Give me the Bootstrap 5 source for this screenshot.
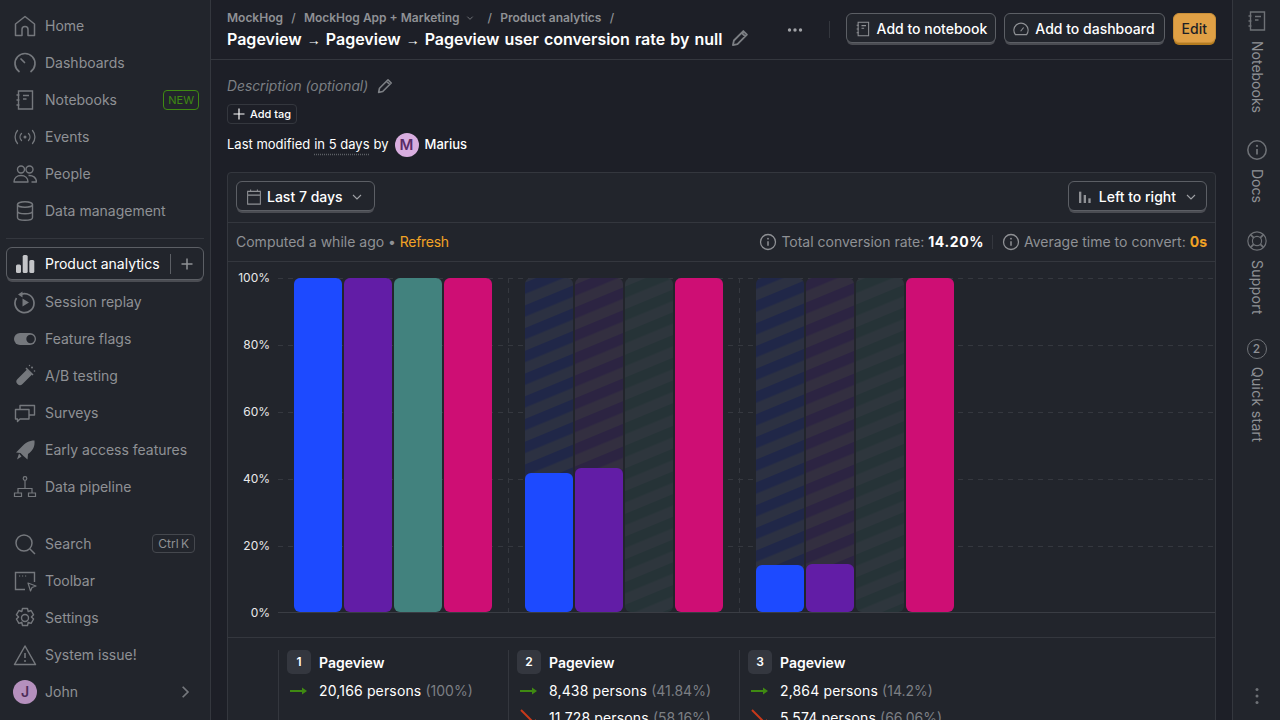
<!DOCTYPE html>
<html lang="en">
<head>
<meta charset="UTF-8">
<title>Pageview conversion</title>
<link href="https://cdn.jsdelivr.net/npm/bootstrap@5.3.0/dist/css/bootstrap.min.css" rel="stylesheet">
<style>
html, body { height: 720px; overflow: hidden; }
body { background: #1d1f27; color: #fff; font-family: Inter, "Liberation Sans", sans-serif; font-size: 14px; }
svg { display: block; flex: none; }
.app-shell { height: 720px; }
.side-nav { width: 211px; background: #22252c; border-right: 1px solid #34373e; padding: 7px 6px 0; }
.side-item { height: 37px; padding: 0 8px 0 7px; gap: 8px; color: #8f9195; text-decoration: none; white-space: nowrap; }
.side-item svg { width: 24px; height: 24px; color: #75787d; }
.side-item svg.side-chev { width: 14px; height: 14px; margin-right: 4px; }
.side-active { height: 33px; margin-bottom: 3px; padding: 0 8px 0 6px; gap: 8px; color: #fff; border: 1px solid #5c5f65; border-radius: 6px; box-shadow: 0 3px 0 -1px #4a4c52; background: #22252c; white-space: nowrap; text-decoration: none; }
.side-active > svg { width: 24px; height: 24px; color: #c4c5c8; }
.side-plus { height: 20px; padding-left: 8px; border-left: 1px solid #5c5f65; color: #8f9195; }
.side-rule { border-top: 1px solid #34373e; margin: 9px 0 8px; }
.tag-new { font-size: 11px; line-height: 18px; color: #3f8a12; border: 1px solid #3f8a12; border-radius: 4px; padding: 0 4px; margin-left: auto; margin-right: -3px; }
.key-hint { font-size: 12px; line-height: 17px; color: #8f9195; border: 1px solid #45484e; border-radius: 4px; padding: 0 5px; margin-left: auto; margin-right: 1px; word-spacing: -1px; }
.avatar-dot { width: 24px; height: 24px; border-radius: 50%; background: #b590bd; color: #4d2c58; font-weight: 600; font-size: 14px; }
.side-bottom { margin-top: auto; padding-bottom: 10px; }
.main-col { min-width: 0; }
.top-bar { height: 60px; border-bottom: 1px solid #34373e; padding: 0 16px; flex: none; }
.crumbs { font-size: 12px; font-weight: 600; color: #8f9195; line-height: 16px; margin-top: 10px; }
.crumbs i { font-style: normal; font-weight: 500; margin: 0 8.250px; }
.page-title { font-size: 16px; font-weight: 600; line-height: 20px; margin: 3px 0 0; white-space: nowrap; word-spacing: 1px; }
.page-title span { font-family: "Liberation Sans", sans-serif; font-weight: 400; font-size: 14px; }
.ghost-icon { color: #7c7f84; }
.top-actions { margin-bottom: 3px; }
.dots-icon { color: #a0a2a6; margin: 4px 17px 0 0; }
.top-split { width: 1px; height: 17px; background: #34373e; margin: 3px 16px 0 8px; }
.lift-btn { height: 30px; color: #fff; background: #22252c; border: 1px solid #5c5f65; border-radius: 6px; box-shadow: 0 3px 0 -1px #4a4c52; padding: 1px 8px 0 7px; gap: 5px; font-size: 14px; font-weight: 500; white-space: nowrap; }
.lift-btn svg { color: #8f9195; }
.top-gap { margin-right: 8px; padding-right: 9px; }
.edit-btn { height: 30px; color: #1d1f27; background: #e0a045; border: 1px solid #c98f39; border-radius: 6px; box-shadow: 0 3px 0 -1px #b57c1f; padding: 1px 8px 0; font-size: 14px; font-weight: 500; }
.page-body { padding: 16px 16px 0; }
.desc-line { color: #7c7f84; font-style: italic; font-size: 13.800px; line-height: 20px; gap: 8px; height: 20px; }
.add-tag { height: 20px; border: 1px solid #34373e; border-radius: 4px; font-size: 11px; font-weight: 500; padding: 0 4px; gap: 4px; margin-top: 8px; width: 70px; }
.modified-line { font-size: 13px; height: 24px; margin-top: 9px; gap: 4px; }
.modified-line u { text-decoration: underline dotted #5c5f65; text-underline-offset: 5px; }
.avatar-m { width: 24px; height: 24px; border-radius: 50%; background: #d9aee0; color: #5a2c66; font-weight: 600; font-size: 15px; margin: 0 2px; }
.funnel-box { background: #22252c; border: 1px solid #34373e; border-radius: 4px; margin-top: 15px; }
.funnel-tools { height: 50px; padding: 8px 8px 0; border-bottom: 1px solid #34373e; }
.funnel-tools .lift-btn { gap: 4px; padding-left: 8px; }
.funnel-tools .lift-btn svg.tools-ltr { margin-right: 2px; }
.funnel-tools .lift-btn svg.tools-chev { color: #a0a2a6; margin-left: 1px; }
.funnel-tools .lift-btn svg.tools-chev-end { margin: 0 -2px 0 2px; }
.funnel-stats { height: 39px; padding: 0 8px 1px; border-bottom: 1px solid #34373e; color: #8f9195; }
.link-amber { color: #f2a325; }
.link-tight { letter-spacing: -.3px; }
.rate-num { letter-spacing: .6px; }
.stat-split { width: 1px; height: 14px; background: #34373e; margin: 0 9px 0 8px; }
.legend-row { border-top: 1px solid #34373e; padding: 12px 0 0 50px; height: 100px; }
.legend-col { border-left: 1px solid #34373e; padding-left: 8px; height: 90px; }
.legend-w1 { width: 230px; }
.legend-w2 { width: 231px; }
.legend-head { margin-bottom: 3px; }
.step-num { width: 24px; height: 24px; border-radius: 5px; background: #34373f; font-size: 12px; font-weight: 600; }
.step-title { font-weight: 600; font-size: 14px; }
.legend-line { height: 27px; gap: 11px; white-space: nowrap; letter-spacing: .15px; }
.legend-line svg { margin-left: 3px; }
.legend-line span { color: #7c7f84; letter-spacing: 0; }
.right-rail { width: 48px; border-left: 1px solid #34373e; background: #22252c; color: #8f9195; flex: none; }
.right-rail > svg { color: #6e7176; }
.rail-top { margin-top: 9px; }
.rail-gap { margin-top: 26px; }
.rail-ring { margin-top: 27px; }
.rail-text { writing-mode: vertical-rl; font-size: 14px; line-height: 20px; margin-top: 8px; }
.rail-wide { letter-spacing: .3px; }
.rail-step { margin-top: 24px; width: 20px; height: 20px; font-size: 12px; font-weight: 500; border: 1.500px solid #6e7176; border-radius: 50%; }
.rail-dots { margin-top: auto; margin-bottom: 15px; }
.chart-svg text { font-family: Inter, "Liberation Sans", sans-serif; }
</style>
</head>
<body>
<svg width="0" height="0" class="position-absolute">
  <defs>
    <symbol id="i-home" viewBox="0 0 24 24"><path d="M2.500 21.500V10L12 2.500 21.500 10v11.500h-6.500v-6a3 3 0 0 0-6 0v6z" fill="none" stroke="currentColor" stroke-width="1.500" stroke-linejoin="round"/></symbol>
    <symbol id="i-dash" viewBox="0 0 24 24"><path d="M6 20.500A10 10 0 1 1 18 20.500M8 8l3.500 3.500" fill="none" stroke="currentColor" stroke-width="1.700" stroke-linecap="round"/></symbol>
    <symbol id="i-note" viewBox="0 0 24 24"><path d="M5.500 3h14v18h-14zM3.500 7h3M3.500 12h3M3.500 17h3M10 7.500h6M10 11h3.500" fill="none" stroke="currentColor" stroke-width="1.400"/></symbol>
    <symbol id="i-events" viewBox="0 0 24 24"><circle cx="12" cy="12" r="1.500" fill="currentColor"/><path d="M8.500 8.500a5 5 0 0 0 0 7M15.500 8.500a5 5 0 0 1 0 7M4.500 5.500a10 10 0 0 0 0 13M19.500 5.500a10 10 0 0 1 0 13" fill="none" stroke="currentColor" stroke-width="1.300" stroke-linecap="round"/></symbol>
    <symbol id="i-people" viewBox="0 0 24 24"><circle cx="8" cy="7.500" r="3.500" fill="none" stroke="currentColor" stroke-width="1.400"/><circle cx="16.500" cy="7.500" r="3.500" fill="none" stroke="currentColor" stroke-width="1.400"/><path d="M1 20c0-4 3-6.500 7-6.500s7 2.500 7 6.500zM15.500 13.500c4-.5 8 2 8 6.500h-5" fill="none" stroke="currentColor" stroke-width="1.400" stroke-linejoin="round"/></symbol>
    <symbol id="i-data" viewBox="0 0 24 24"><ellipse cx="12" cy="5.500" rx="7.500" ry="2.800" fill="none" stroke="currentColor" stroke-width="1.400"/><path d="M4.500 5.500v13c0 1.600 3.400 2.800 7.500 2.800s7.500-1.200 7.500-2.800v-13M4.500 12c0 1.600 3.400 2.800 7.500 2.800s7.500-1.200 7.500-2.800" fill="none" stroke="currentColor" stroke-width="1.400"/></symbol>
    <symbol id="i-bars" viewBox="0 0 24 24"><rect x="3" y="12.500" width="5" height="8.500" rx="1.500" fill="currentColor"/><rect x="9.700" y="3" width="5" height="18" rx="1.500" fill="currentColor"/><rect x="16.300" y="8" width="5" height="13" rx="1.500" fill="currentColor"/></symbol>
    <symbol id="i-replay" viewBox="0 0 24 24"><path d="M8 4.300A9.500 9.500 0 1 1 3.500 8" fill="none" stroke="currentColor" stroke-width="1.700"/><path d="M9.500 1.500v6l-4.500-3z" fill="currentColor"/><path d="M9.500 8.500l6.500 4-6.500 4z" fill="currentColor"/></symbol>
    <symbol id="i-flag" viewBox="0 0 24 24"><rect x="1" y="6" width="22" height="12" rx="6" fill="currentColor"/><circle cx="17.500" cy="12" r="4.200" fill="#22252c"/></symbol>
    <symbol id="i-test" viewBox="0 0 24 24"><path d="M14 5.500l5 5-9.500 9.500a3.500 3.500 0 0 1-5-5z" fill="currentColor"/><path d="M13 4l7 7" stroke="currentColor" stroke-width="1.500"/><circle cx="19" cy="3.500" r="1" fill="currentColor"/><circle cx="21.500" cy="7" r=".8" fill="currentColor"/><circle cx="16.500" cy="1.500" r=".7" fill="currentColor"/></symbol>
    <symbol id="i-survey" viewBox="0 0 24 24"><path d="M2.500 8.500h13.500v9.500h-9l-2.500 2.500v-2.500h-2zM7 8V4.500h14.500V14h-5" fill="none" stroke="currentColor" stroke-width="1.400" stroke-linejoin="round"/></symbol>
    <symbol id="i-rocket" viewBox="0 0 24 24"><path d="M21.500 2.500c.5 6-1.500 10-6.500 13.500l-.5 5.500-4-3.500-3-3-4.500-.5 5-5C12 5 16 2.500 21.500 2.500zM6 15.500l2.500 3-4.500 3z" fill="currentColor"/></symbol>
    <symbol id="i-pipe" viewBox="0 0 24 24"><circle cx="12" cy="3.500" r="1.800" fill="none" stroke="currentColor" stroke-width="1.200"/><path d="M12 5.500V13M5 18v-4.500h14V18M1.500 18h7v3.500h-7zM15.500 18h7v3.500h-7z" fill="none" stroke="currentColor" stroke-width="1.200"/></symbol>
    <symbol id="i-search" viewBox="0 0 24 24"><circle cx="11" cy="11" r="8" fill="none" stroke="currentColor" stroke-width="1.500"/><path d="M17 17l5 5" stroke="currentColor" stroke-width="1.500"/></symbol>
    <symbol id="i-toolbar" viewBox="0 0 24 24"><path d="M12 20.500H2.500v-17h19V13" fill="none" stroke="currentColor" stroke-width="1.400"/><path d="M15 14l8 3-4 1.500-1.500 3.500z" fill="none" stroke="currentColor" stroke-width="1.200" stroke-linejoin="round"/><path d="M6 7h1.200M9 7h1.200M12 7h1.200" stroke="currentColor" stroke-width="1.200"/></symbol>
    <symbol id="i-gear" viewBox="0 0 24 24"><circle cx="12" cy="12" r="3.500" fill="none" stroke="currentColor" stroke-width="1.400"/><path d="M9.500 2.500h5l.7 3 2.900-1 2.500 4.300-2.200 2.200 2.200 2-2.500 4.300-2.900-1-.7 3.200h-5l-.7-3.200-2.900 1-2.500-4.300 2.200-2-2.200-2.200 2.500-4.300 2.900 1z" fill="none" stroke="currentColor" stroke-width="1.400" stroke-linejoin="round"/></symbol>
    <symbol id="i-warn" viewBox="0 0 24 24"><path d="M12 3l10.500 18.500h-21z" fill="none" stroke="currentColor" stroke-width="1.500" stroke-linejoin="round"/><path d="M12 10v5" stroke="currentColor" stroke-width="1.600"/><circle cx="12" cy="18" r="1" fill="currentColor"/></symbol>
    <symbol id="i-pencil" viewBox="0 0 24 24"><path d="M3.500 20.500l1.200-5.500L16 3.700 20.300 8 9 19.300zM14 5.700L18.300 10" fill="none" stroke="currentColor" stroke-width="2.200" stroke-linejoin="round"/></symbol>
    <symbol id="i-info" viewBox="0 0 24 24"><circle cx="12" cy="12" r="10" fill="none" stroke="currentColor" stroke-width="1.700"/><path d="M12 11v6" stroke="currentColor" stroke-width="2"/><circle cx="12" cy="7.500" r="1.200" fill="currentColor"/></symbol>
    <symbol id="i-chev" viewBox="0 0 18 18"><path d="M5 7l4 4 4-4" fill="none" stroke="currentColor" stroke-width="1.100"/></symbol>
    <symbol id="i-cal" viewBox="0 0 24 24"><path d="M3.500 4.500h17v17h-17zM3.500 9.500h17M7.500 2v3M16.500 2v3" fill="none" stroke="currentColor" stroke-width="1.400"/></symbol>
    <symbol id="i-gauge" viewBox="0 0 24 24"><path d="M6 19.500h-1.500a9.500 9.500 0 1 1 15 0H6z" fill="none" stroke="currentColor" stroke-width="1.500" stroke-linejoin="round"/><path d="M11.500 15l4-5" stroke="currentColor" stroke-width="1.500"/></symbol>
    <symbol id="i-ltr" viewBox="0 0 24 24"><rect x="3" y="4" width="3.500" height="17" fill="currentColor"/><rect x="10" y="9" width="3.500" height="12" fill="currentColor"/><rect x="17" y="14" width="3.500" height="7" fill="currentColor"/></symbol>
    <symbol id="i-ring" viewBox="0 0 24 24"><circle cx="12" cy="12" r="10" fill="none" stroke="currentColor" stroke-width="1.300"/><circle cx="12" cy="12" r="5" fill="none" stroke="currentColor" stroke-width="1.300"/><path d="M5 5l3.500 3.500M19 5l-3.500 3.500M5 19l3.500-3.500M19 19l-3.500-3.500" stroke="currentColor" stroke-width="2"/></symbol>
    <symbol id="i-go" viewBox="0 0 18 12"><path d="M0 6h15" stroke="#3f8a12" stroke-width="2"/><path d="M12 2.500L17 6l-5 3.500z" fill="#3f8a12"/></symbol>
    <symbol id="i-drop" viewBox="0 0 18 18"><path d="M1 1l13 13" stroke="#c9391a" stroke-width="2"/><path d="M16 16h-6l6-6z" fill="#c9391a"/></symbol>
  </defs>
</svg>

<div class="app-shell d-flex">
  <nav class="side-nav d-flex flex-column flex-shrink-0">
    <a class="side-item d-flex align-items-center"><svg><use href="#i-home"/></svg>Home</a>
    <a class="side-item d-flex align-items-center"><svg><use href="#i-dash"/></svg>Dashboards</a>
    <a class="side-item d-flex align-items-center"><svg><use href="#i-note"/></svg>Notebooks<span class="tag-new">NEW</span></a>
    <a class="side-item d-flex align-items-center"><svg><use href="#i-events"/></svg>Events</a>
    <a class="side-item d-flex align-items-center"><svg><use href="#i-people"/></svg>People</a>
    <a class="side-item d-flex align-items-center"><svg><use href="#i-data"/></svg>Data management</a>
    <div class="side-rule"></div>
    <a class="side-active d-flex align-items-center"><svg><use href="#i-bars"/></svg><span>Product analytics</span>
      <span class="side-plus ms-auto d-flex align-items-center"><svg width="16" height="16" viewBox="0 0 16 16"><path d="M8 2.500v11M2.500 8h11" stroke="currentColor" stroke-width="1.500"/></svg></span></a>
    <a class="side-item d-flex align-items-center"><svg><use href="#i-replay"/></svg>Session replay</a>
    <a class="side-item d-flex align-items-center"><svg><use href="#i-flag"/></svg>Feature flags</a>
    <a class="side-item d-flex align-items-center"><svg><use href="#i-test"/></svg>A/B testing</a>
    <a class="side-item d-flex align-items-center"><svg><use href="#i-survey"/></svg>Surveys</a>
    <a class="side-item d-flex align-items-center"><svg><use href="#i-rocket"/></svg>Early access features</a>
    <a class="side-item d-flex align-items-center"><svg><use href="#i-pipe"/></svg>Data pipeline</a>
    <div class="side-bottom">
      <a class="side-item d-flex align-items-center"><svg><use href="#i-search"/></svg>Search<span class="key-hint">Ctrl K</span></a>
      <a class="side-item d-flex align-items-center"><svg><use href="#i-toolbar"/></svg>Toolbar</a>
      <a class="side-item d-flex align-items-center"><svg><use href="#i-gear"/></svg>Settings</a>
      <a class="side-item d-flex align-items-center"><svg><use href="#i-warn"/></svg>System issue!</a>
      <a class="side-item d-flex align-items-center"><span class="avatar-dot d-flex align-items-center justify-content-center flex-shrink-0">J</span>John
        <svg class="side-chev ms-auto" viewBox="0 0 12 12"><path d="M4 1.500L8.500 6 4 10.500" fill="none" stroke="currentColor" stroke-width="1.500"/></svg></a>
    </div>
  </nav>

  <div class="main-col flex-grow-1 d-flex flex-column overflow-hidden">
    <header class="top-bar d-flex justify-content-between">
      <div>
        <div class="crumbs d-flex align-items-center">MockHog<i>/</i>MockHog App + Marketing<svg class="ms-1 me-1" width="12" height="12" viewBox="0 0 18 18"><use href="#i-chev"/></svg><i class="ms-2">/</i>Product analytics<i>/</i></div>
        <div class="d-flex align-items-center gap-2">
          <h1 class="page-title">Pageview <span>→</span> Pageview <span>→</span> Pageview user conversion rate by null</h1>
          <svg class="ghost-icon" width="20" height="20"><use href="#i-pencil"/></svg>
        </div>
      </div>
      <div class="top-actions d-flex align-items-center">
        <svg class="dots-icon" width="18" height="6" viewBox="0 0 18 6"><circle cx="3.500" cy="3" r="1.700" fill="currentColor"/><circle cx="9" cy="3" r="1.700" fill="currentColor"/><circle cx="14.500" cy="3" r="1.700" fill="currentColor"/></svg>
        <span class="top-split"></span>
        <button class="lift-btn d-flex align-items-center me-2"><svg width="18" height="18"><use href="#i-note"/></svg>Add to notebook</button>
        <button class="lift-btn top-gap d-flex align-items-center"><svg width="18" height="18"><use href="#i-gauge"/></svg>Add to dashboard</button>
        <button class="edit-btn">Edit</button>
      </div>
    </header>

    <main class="page-body">
      <div class="desc-line d-flex align-items-center">Description (optional)<svg width="18" height="18"><use href="#i-pencil"/></svg></div>
      <div class="add-tag d-flex align-items-center"><svg width="14" height="14" viewBox="0 0 14 14"><path d="M7 1.500v11M1.500 7h11" stroke="currentColor" stroke-width="1.200"/></svg>Add tag</div>
      <div class="modified-line d-flex align-items-center">Last modified <u>in 5 days</u> by
        <span class="avatar-m d-flex align-items-center justify-content-center">M</span><span class="fw-medium">Marius</span></div>

      <section class="funnel-box">
        <div class="funnel-tools d-flex align-items-start justify-content-between">
          <button class="lift-btn d-flex align-items-center"><svg width="18" height="18"><use href="#i-cal"/></svg>Last 7 days<svg class="tools-chev" width="18" height="18"><use href="#i-chev"/></svg></button>
          <button class="lift-btn d-flex align-items-center"><svg class="tools-ltr" width="16" height="16"><use href="#i-ltr"/></svg>Left to right<svg class="tools-chev tools-chev-end" width="18" height="18"><use href="#i-chev"/></svg></button>
        </div>
        <div class="funnel-stats d-flex align-items-center">
          <span>Computed a while ago • <span class="link-amber link-tight">Refresh</span></span>
          <span class="ms-auto d-flex align-items-center">
            <svg class="me-1" width="18" height="18"><use href="#i-info"/></svg>Total conversion rate:
            <b class="rate-num text-white ms-1">14.20%</b>
            <span class="stat-split"></span>
            <svg class="me-1" width="18" height="18"><use href="#i-info"/></svg>Average time to convert:
            <b class="link-amber ms-1">0s</b>
          </span>
        </div>

        <svg class="chart-svg" width="987" height="375" viewBox="228 262 987 375">
          <defs>
            <pattern id="stripe-blue" width="40" height="21" patternUnits="userSpaceOnUse" patternTransform="rotate(-22.500)"><rect width="40" height="21" fill="#2c3142"/><rect width="40" height="10.500" fill="#202748"/></pattern>
            <pattern id="stripe-purple" width="40" height="21" patternUnits="userSpaceOnUse" patternTransform="rotate(-22.500)"><rect width="40" height="21" fill="#332f40"/><rect width="40" height="10.500" fill="#2c2442"/></pattern>
            <pattern id="stripe-teal" width="40" height="21" patternUnits="userSpaceOnUse" patternTransform="rotate(-22.500)"><rect width="40" height="21" fill="#2e363d"/><rect width="40" height="10.500" fill="#263337"/></pattern>
          </defs>
          <g stroke="#35383f" stroke-dasharray="5 5">
            <path d="M278 278.500H1215M278 345.500H1215M278 412.500H1215M278 479.500H1215M278 546.500H1215"/>
            <path d="M508.500 278V612M739.500 278V612"/>
          </g>
          <path d="M278 612.500H1215" stroke="#3a3d44"/>
          <g fill="#fff" font-size="12" text-anchor="end" opacity=".9">
            <text x="270" y="282">100%</text><text x="270" y="349">80%</text><text x="270" y="416">60%</text>
            <text x="270" y="483">40%</text><text x="270" y="550">20%</text><text x="270" y="617">0%</text>
          </g>
          <rect x="294" y="278" width="48" height="334" rx="6" fill="#1d4aff"/>
          <rect x="344" y="278" width="48" height="334" rx="6" fill="#621da6"/>
          <rect x="394" y="278" width="48" height="334" rx="6" fill="#42827e"/>
          <rect x="444" y="278" width="48" height="334" rx="6" fill="#ce0e74"/>
          <rect x="525" y="278" width="48" height="334" rx="6" fill="url(#stripe-blue)"/>
          <rect x="575" y="278" width="48" height="334" rx="6" fill="url(#stripe-purple)"/>
          <rect x="625" y="278" width="48" height="334" rx="6" fill="url(#stripe-teal)"/>
          <rect x="675" y="278" width="48" height="334" rx="6" fill="#ce0e74"/>
          <rect x="525" y="473" width="48" height="139" rx="6" fill="#1d4aff"/>
          <rect x="575" y="468" width="48" height="144" rx="6" fill="#621da6"/>
          <rect x="756" y="278" width="48" height="334" rx="6" fill="url(#stripe-blue)"/>
          <rect x="806" y="278" width="48" height="334" rx="6" fill="url(#stripe-purple)"/>
          <rect x="856" y="278" width="48" height="334" rx="6" fill="url(#stripe-teal)"/>
          <rect x="906" y="278" width="48" height="334" rx="6" fill="#ce0e74"/>
          <rect x="756" y="565" width="48" height="47" rx="6" fill="#1d4aff"/>
          <rect x="806" y="564" width="48" height="48" rx="6" fill="#621da6"/>
        </svg>

        <div class="legend-row d-flex">
          <div class="legend-col legend-w1">
            <div class="legend-head d-flex align-items-center gap-2"><span class="step-num d-flex align-items-center justify-content-center">1</span><span class="step-title">Pageview</span></div>
            <div class="legend-line d-flex align-items-center"><svg width="18" height="12"><use href="#i-go"/></svg><div>20,166 persons <span>(100%)</span></div></div>
          </div>
          <div class="legend-col legend-w2">
            <div class="legend-head d-flex align-items-center gap-2"><span class="step-num d-flex align-items-center justify-content-center">2</span><span class="step-title">Pageview</span></div>
            <div class="legend-line d-flex align-items-center"><svg width="18" height="12"><use href="#i-go"/></svg><div>8,438 persons <span>(41.84%)</span></div></div>
            <div class="legend-line d-flex align-items-center"><svg width="18" height="18"><use href="#i-drop"/></svg><div>11,728 persons <span>(58.16%)</span></div></div>
          </div>
          <div class="legend-col legend-w2">
            <div class="legend-head d-flex align-items-center gap-2"><span class="step-num d-flex align-items-center justify-content-center">3</span><span class="step-title">Pageview</span></div>
            <div class="legend-line d-flex align-items-center"><svg width="18" height="12"><use href="#i-go"/></svg><div>2,864 persons <span>(14.2%)</span></div></div>
            <div class="legend-line d-flex align-items-center"><svg width="18" height="18"><use href="#i-drop"/></svg><div>5,574 persons <span>(66.06%)</span></div></div>
          </div>
        </div>
      </section>
    </main>
  </div>

  <aside class="right-rail d-flex flex-column align-items-center">
    <svg class="rail-top" width="24" height="24"><use href="#i-note"/></svg>
    <span class="rail-text">Notebooks</span>
    <svg class="rail-gap" width="22" height="22"><use href="#i-info"/></svg>
    <span class="rail-text">Docs</span>
    <svg class="rail-ring" width="22" height="22"><use href="#i-ring"/></svg>
    <span class="rail-text rail-wide">Support</span>
    <span class="rail-step d-flex align-items-center justify-content-center">2</span>
    <span class="rail-text rail-wide">Quick start</span>
    <svg class="rail-dots" width="6" height="18" viewBox="0 0 6 18"><circle cx="3" cy="2.500" r="1.500" fill="currentColor"/><circle cx="3" cy="9" r="1.500" fill="currentColor"/><circle cx="3" cy="15.500" r="1.500" fill="currentColor"/></svg>
  </aside>
</div>
<script src="https://cdn.jsdelivr.net/npm/bootstrap@5.3.0/dist/js/bootstrap.bundle.min.js"></script>
</body>
</html>
